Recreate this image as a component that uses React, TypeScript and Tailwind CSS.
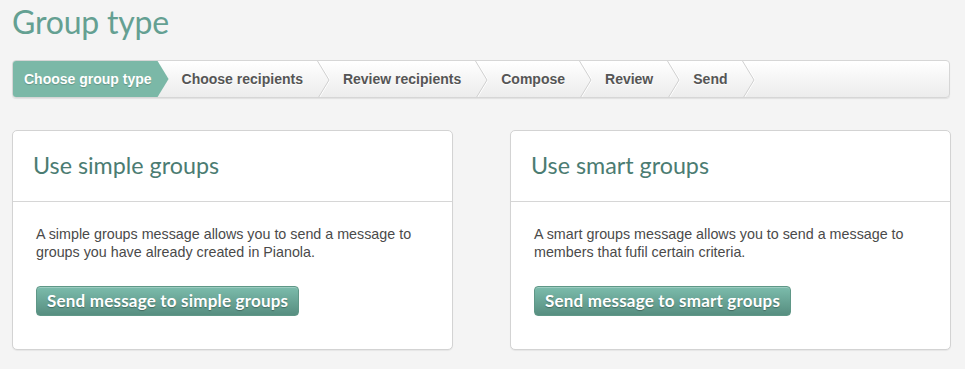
const steps = ["Choose recipients", "Review recipients", "Compose", "Review", "Send"];

const cards = [
  {
    title: "Use simple groups",
    text: "A simple groups message allows you to send a message to groups you have already created in Pianola.",
    button: "Send message to simple groups",
  },
  {
    title: "Use smart groups",
    text: "A smart groups message allows you to send a message to members that fufil certain criteria.",
    button: "Send message to smart groups",
  },
];

function Separator() {
  return (
    <svg width="13" height="38" viewBox="0 0 13 38" className="shrink-0">
      <polyline points="1.5,0 13,19 1.5,38" fill="none" stroke="#fff" strokeWidth="1" />
      <polyline points="0.5,0 12,19 0.5,38" fill="none" stroke="#d0d0d0" strokeWidth="1" />
    </svg>
  );
}

export default function App() {
  return (
    <div className="min-h-screen bg-[#f4f4f4] px-3 pt-[2px] font-['Liberation_Sans',Arial,sans-serif]">
      <h1 className="font-['Lato',sans-serif] text-[32px] leading-[40px] text-[#64a092] tracking-[-0.2px]">
        Group type
      </h1>

      <div className="mt-[18px] flex h-[38px] w-[938px] items-stretch overflow-hidden rounded-[4px] border border-[#d6d6d6] bg-gradient-to-b from-white to-[#ececec] shadow-[0_1px_1px_rgba(0,0,0,0.08)]">
        <div className="flex items-center bg-[#7bb8a7] pl-[11px] pr-[17px] text-[14px] font-bold text-white [clip-path:polygon(0_0,calc(100%-11px)_0,100%_50%,calc(100%-11px)_100%,0_100%)] [text-shadow:0_1px_1px_rgba(0,0,0,0.2)]">
          Choose group type
        </div>
        {steps.map((s) => (
          <div key={s} className="flex items-stretch">
            <div className="flex items-center pl-[13px] pr-[14px] text-[14px] font-bold text-[#555] [text-shadow:0_1px_0_#fff]">
              {s}
            </div>
            <Separator />
          </div>
        ))}
      </div>

      <div className="mt-[32px] flex w-[939px] gap-[57px]">
        {cards.map((c) => (
          <div key={c.title} className="h-[220px] w-[441px] rounded-[5px] border border-[#d3d3d3] bg-white shadow-[0_1px_1px_rgba(0,0,0,0.06)]">
            <div className="flex h-[71px] items-center border-b border-[#d6d6d6] px-[20px]">
              <h2 className="font-['Lato',sans-serif] text-[23.3px] leading-none text-[#4b7c72]">{c.title}</h2>
            </div>
            <div className="px-[23px] pt-[23px]">
              <p className="w-[395px] text-[14.3px] leading-[18px] text-[#4a4a4a]">{c.text}</p>
              <button className="mt-[25px] h-[30px] rounded-[4px] border border-[#5f9787] bg-gradient-to-b from-[#7cbcac] to-[#578e80] px-[10px] font-['Lato',sans-serif] text-[17px] font-bold tracking-[0.2px] text-white shadow-[inset_0_1px_0_rgba(255,255,255,0.25)] [text-shadow:0_1px_1px_rgba(0,0,0,0.3)]">
                {c.button}
              </button>
            </div>
          </div>
        ))}
      </div>
    </div>
  );
}
